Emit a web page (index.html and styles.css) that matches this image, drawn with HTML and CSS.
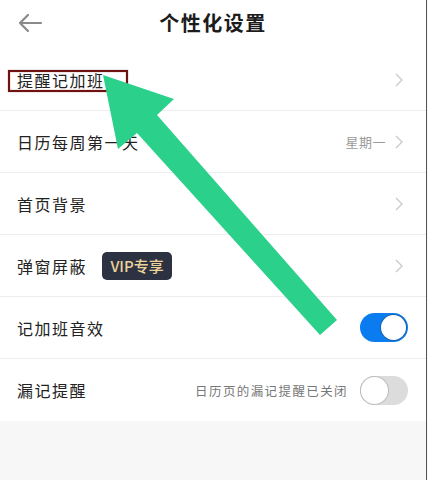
FILE: index.html
```html
<!DOCTYPE html>
<html lang="zh-CN">
<head>
<meta charset="utf-8">
<title>个性化设置</title>
<link rel="stylesheet" href="styles.css">
</head>
<body>
<div class="app">
  <header class="header">
    <svg class="back" width="26" height="20" viewBox="0 0 26 20"><path d="M24 10H3M11 2L3 10L11 18" fill="none" stroke="#8a8a8a" stroke-width="2.2" stroke-linecap="round" stroke-linejoin="round"/></svg>
    <h1 class="title">个性化设置</h1>
  </header>
  <ul class="list">
    <li class="row">
      <span class="label">提醒记加班</span>
      <span class="right"><svg class="chev" width="8" height="14" viewBox="0 0 8 14"><path d="M1 1L7 7L1 13" fill="none" stroke="#c9c9c9" stroke-width="1.3"/></svg></span>
    </li>
    <li class="row">
      <span class="label">日历每周第一天</span>
      <span class="right"><span class="value">星期一</span><svg class="chev" width="8" height="14" viewBox="0 0 8 14"><path d="M1 1L7 7L1 13" fill="none" stroke="#c9c9c9" stroke-width="1.3"/></svg></span>
    </li>
    <li class="row">
      <span class="label">首页背景</span>
      <span class="right"><svg class="chev" width="8" height="14" viewBox="0 0 8 14"><path d="M1 1L7 7L1 13" fill="none" stroke="#c9c9c9" stroke-width="1.3"/></svg></span>
    </li>
    <li class="row">
      <span class="label-group"><span class="label">弹窗屏蔽</span><span class="vip">VIP专享</span></span>
      <span class="right"><svg class="chev" width="8" height="14" viewBox="0 0 8 14"><path d="M1 1L7 7L1 13" fill="none" stroke="#c9c9c9" stroke-width="1.3"/></svg></span>
    </li>
    <li class="row">
      <span class="label">记加班音效</span>
      <span class="right"><span class="toggle on"><span class="knob"></span></span></span>
    </li>
    <li class="row last">
      <span class="label">漏记提醒</span>
      <span class="right"><span class="hint">日历页的漏记提醒已关闭</span><span class="toggle off"><span class="knob"></span></span></span>
    </li>
  </ul>
  <svg class="overlay" width="428" height="480" viewBox="0 0 428 480">
    <rect x="9" y="71" width="118" height="20" fill="none" stroke="#6e1212" stroke-width="2.2"/>
    <polygon points="103,75 174,99 157,115 337,320 320,335 137,133 118,149" fill="#2bd08b"/>
  </svg>
</div>
</body>
</html>
```

FILE: styles.css
```css
* { box-sizing: border-box; }
html, body { margin: 0; padding: 0; }
body {
  background: #f7f7f7;
  font-family: "Noto Sans CJK SC", "Noto Sans", sans-serif;
  color: #222;
}
.app {
  position: relative;
  width: 427px;
  height: 480px;
  border-right: 1px solid #555;
  background: #f7f7f7;
  overflow: hidden;
}
.header {
  position: relative;
  height: 49px;
  background: #fff;
  display: flex;
  align-items: center;
  justify-content: center;
}
.back {
  position: absolute;
  left: 17px;
  top: 13px;
}
.title {
  margin: 0;
  font-size: 20px;
  font-weight: 700;
  letter-spacing: 1.5px;
  color: #1c1c1c;
  line-height: 1;
  margin-top: -4px;
}
.list {
  list-style: none;
  margin: 0;
  padding: 0;
  background: #fff;
}
.row {
  height: 62px;
  display: flex;
  align-items: center;
  justify-content: space-between;
  padding: 0 18px 0 17px;
  border-bottom: 1px solid #ededed;
}
.row.last { border-bottom: none; }
.label {
  font-size: 16px;
  letter-spacing: 1.5px;
  color: #222;
}
.label-group {
  display: flex;
  align-items: center;
  gap: 15px;
}
.vip {
  display: inline-flex;
  align-items: center;
  justify-content: center;
  width: 70px;
  height: 28px;
  border-radius: 5px;
  background: #2c3242;
  color: #ecd39a;
  font-size: 15px;
  font-weight: 500;
  font-family: "Noto Sans CJK SC", "Noto Sans", sans-serif;
}
.right {
  display: flex;
  align-items: center;
}
.chev { margin-right: 5px; }
.value {
  font-size: 13px;
  color: #9a9a9a;
  letter-spacing: 0.5px;
  margin-right: 9px;
}
.hint {
  font-size: 12.5px;
  color: #777;
  letter-spacing: 1.4px;
  margin-right: 12px;
}
.toggle {
  position: relative;
  width: 48px;
  height: 29px;
  border-radius: 15px;
  display: inline-block;
}
.toggle.on { background: #0a7cf0; }
.toggle.off { background: #dcdcdc; }
.knob {
  position: absolute;
  top: 2px;
  width: 25px;
  height: 25px;
  border-radius: 50%;
  background: #fff;
}
.toggle.on .knob { right: 2px; box-shadow: 0 0 0 1px #1d64b0; }
.toggle.off .knob { left: 1px; top: 1px; width: 27px; height: 27px; box-shadow: 0 0 0 1px #bdbdbd; }
.overlay {
  position: absolute;
  left: 0;
  top: 0;
  pointer-events: none;
}
```
